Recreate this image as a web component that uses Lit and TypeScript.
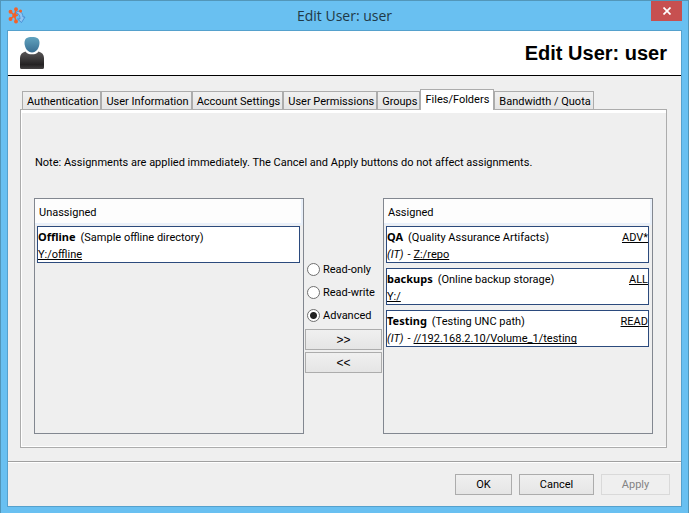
import { LitElement, html, css, svg } from "lit";
import { customElement, property, state } from "lit/decorators.js";
import { classMap } from "lit/directives/class-map.js";

interface Folder {
  name: string;
  note: string;
  owner?: string;
  path: string;
  access?: string;
}

const TABS = [
  "Authentication",
  "User Information",
  "Account Settings",
  "User Permissions",
  "Groups",
  "Files/Folders",
  "Bandwidth / Quota",
];

const MODES = ["Read-only", "Read-write", "Advanced"];

const UNASSIGNED: Folder[] = [
  { name: "Offline", note: "(Sample offline directory)", path: "Y:/offline" },
];

const ASSIGNED: Folder[] = [
  { name: "QA", note: "(Quality Assurance Artifacts)", owner: "(IT)", path: "Z:/repo", access: "ADV*" },
  { name: "backups", note: "(Online backup storage)", path: "Y:/", access: "ALL" },
  { name: "Testing", note: "(Testing UNC path)", owner: "(IT)", path: "//192.168.2.10/Volume_1/testing", access: "READ" },
];

@customElement("folder-list")
class FolderList extends LitElement {
  @property() heading = "";
  @property({ attribute: false }) folders: Folder[] = [];

  static styles = css`
    :host {
      display: block;
      box-sizing: border-box;
      min-width: 0;
      border: 1px solid #828790;
    }
    .heading {
      margin: 0;
      padding: 4px 4px 0;
      font-size: 11px;
      font-weight: 400;
      line-height: 20px;
      background: #fdfdfd;
      border-right: 2px solid #e9f0fa;
      border-bottom: 2px solid #e9f0fa;
    }
    .items {
      list-style: none;
      margin: 0;
      padding: 1px 3px 0 2px;
      display: flex;
      flex-direction: column;
      gap: 5px;
    }
    .item {
      border: 1px solid #2b4a7d;
      background: #fff;
      padding-top: 1px;
      display: flex;
      flex-direction: column;
    }
    .row {
      display: flex;
      align-items: baseline;
      line-height: 17px;
      height: 18px;
      white-space: nowrap;
    }
    .row + .row {
      line-height: 18px;
      height: 16px;
    }
    .name {
      font-family: "Noto Sans", sans-serif;
      font-weight: 700;
      margin-right: 5px;
    }
    .owner {
      font-style: italic;
    }
    .owner-gap {
      margin: 0 3px 0 4px;
    }
    .access {
      margin-left: auto;
    }
    a {
      color: #000;
      text-decoration: underline;
      text-underline-offset: 1px;
      text-decoration-skip-ink: none;
    }
  `;

  render() {
    return html`
      <h2 class="heading">${this.heading}</h2>
      <ul class="items">
        ${this.folders.map(
          (f) => html`<li class="item">
            <div class="row">
              <span class="name">${f.name}</span><span>${f.note}</span>
              ${f.access ? html`<a class="access" href="#access">${f.access}</a>` : ""}
            </div>
            <div class="row">
              ${f.owner ? html`<span class="owner">${f.owner}</span><span class="owner-gap">-</span>` : ""}<a href="#path">${f.path}</a>
            </div>
          </li>`
        )}
      </ul>
    `;
  }
}

@customElement("app-root")
class AppRoot extends LitElement {
  @state() private tab = "Files/Folders";
  @state() private mode = "Advanced";

  static styles = css`
    :host {
      display: flex;
      flex-direction: column;
      box-sizing: border-box;
      min-height: 100vh;
      padding: 0 6px 6px;
      background: #69c0f1;
      border: 1px solid #5296b9;
      border-bottom: 0;
      color: #000;
      font: 11px/14px Roboto, "Liberation Sans", sans-serif;
    }
    .titlebar {
      display: grid;
      grid-template-columns: 31px 1fr 31px;
      height: 29px;
      align-items: center;
    }
    .logo {
      display: block;
      margin-left: 1px;
    }
    .caption {
      text-align: center;
      font: 14px/20px "Open Sans", sans-serif;
      color: #1f3947;
    }
    .close {
      align-self: start;
      height: 20px;
      padding: 0;
      border: 0;
      background: #c75050;
      display: grid;
      place-items: center;
    }
    .client {
      flex: 1;
      display: flex;
      flex-direction: column;
      background: #efefef;
      border: 1px solid #55a1cd;
    }
    .banner {
      display: flex;
      align-items: center;
      justify-content: space-between;
      height: 44px;
      padding: 0 14px 0 12px;
      background: #fff;
      border-bottom: 1px solid #000;
    }
    .banner h1 {
      margin: 0;
      font: bold 20px/24px "Liberation Sans", sans-serif;
    }
    .content {
      flex: 1;
      display: flex;
      flex-direction: column;
      padding: 13px 14px 13px 12px;
    }
    .tabs {
      display: flex;
      align-items: flex-end;
      padding: 0 2px;
      z-index: 1;
    }
    .tab {
      box-sizing: border-box;
      height: 18px;
      padding: 2px 2px 0 4px;
      border: 1px solid #acacac;
      border-bottom: 0;
      background: linear-gradient(#f0f0f0, #e5e5e5);
      font: inherit;
      line-height: 15px;
      color: #000;
      white-space: nowrap;
    }
    .tab.selected {
      height: 21px;
      margin-bottom: -1px;
      padding: 0 4px 2px;
      background: #fff;
    }
    .panel {
      flex: 1;
      display: flex;
      flex-direction: column;
      border: 1px solid #acacac;
      box-shadow: inset 1px 3px #fff, inset 0 -1px #fff;
      padding: 46px 13px 13px;
    }
    .note {
      margin: 0 0 28px;
      padding-left: 1px;
    }
    .lists {
      flex: 1;
      display: grid;
      grid-template-columns: 1fr auto 1fr;
    }
    .middle {
      display: flex;
      flex-direction: column;
      gap: 2px;
      width: 77px;
      margin: 60px 1px 0;
    }
    .modes {
      border: 0;
      margin: 0;
      padding: 0 0 0 2px;
    }
    .mode {
      display: flex;
      align-items: center;
      gap: 3px;
      height: 23px;
    }
    .radio {
      appearance: none;
      box-sizing: border-box;
      flex: none;
      width: 13px;
      height: 13px;
      margin: 0;
      border: 1px solid #707070;
      border-radius: 50%;
      background: #fff;
    }
    .radio:checked {
      background: radial-gradient(circle, #222 0 3px, #fff 4px);
    }
    .btn {
      box-sizing: border-box;
      height: 21px;
      padding: 0;
      border: 1px solid #acacac;
      background: linear-gradient(#f0f0f0, #e5e5e5);
      font: inherit;
      color: #000;
    }
    .btn:disabled {
      border-color: #d9d9d9;
      background: #efefef;
      color: #838383;
    }
    .arrows {
      font-family: "Liberation Sans", sans-serif;
      font-size: 12px;
    }
    .footer {
      display: flex;
      justify-content: flex-end;
      gap: 7px;
      padding: 12px 11px 11px;
      border-top: 1px solid #a0a0a0;
      box-shadow: inset 0 1px #fff;
    }
    .ok {
      width: 57px;
    }
    .cancel {
      width: 75px;
    }
    .apply {
      width: 69px;
    }
  `;

  private logo() {
    return svg`<svg class="logo" width="18" height="18" viewBox="0 0 18 18" aria-hidden="true">
      <path d="M7.500 6.500C9 3 14.500 3.500 15 10H17L13.500 15.500L9.500 12H12C12 7.500 10 5.800 7.500 6.500Z" fill="#8fc4f2" stroke="#3f86cf" stroke-width="0.800" />
      <g stroke="#f2622a" stroke-width="1.500" fill="#f2622a">
        <path d="M6.500 8.500L8 2.500M6.500 8.500L2.500 4.800M6.500 8.500L2.500 12M6.500 8.500L8 14.500M6.500 8.500L10 8" />
        <circle cx="8" cy="2.200" r="1.200" /><circle cx="2.500" cy="4.800" r="1.200" />
        <circle cx="2.500" cy="12" r="1.200" /><circle cx="8" cy="14.500" r="1.200" />
        <circle cx="12.500" cy="4" r="0.800" /><circle cx="6.500" cy="8.500" r="1.500" />
      </g>
    </svg>`;
  }

  private person() {
    return svg`<svg width="24" height="32" viewBox="0 0 24 32" aria-hidden="true">
      <defs>
        <linearGradient id="head" x1="0" y1="0" x2="0" y2="1">
          <stop offset="0" stop-color="#61a3bf" /><stop offset="1" stop-color="#386e92" />
        </linearGradient>
        <linearGradient id="body" x1="0" y1="0" x2="0" y2="1">
          <stop offset="0" stop-color="#5a5859" /><stop offset="0.750" stop-color="#242223" /><stop offset="1" stop-color="#444243" />
        </linearGradient>
      </defs>
      <path d="M5.500 14.500C7.500 18.300 16.500 18.300 18.500 14.500C22 15.500 24 17.500 24 21V30.500Q24 32 22.500 32H1.500Q0 32 0 30.500V21C0 17.500 2 15.500 5.500 14.500Z" fill="url(#body)" />
      <path d="M12 0C17 0 19.500 1.500 19.500 6C19.500 11 16 15.500 12 15.500C8 15.500 4.500 11 4.500 6C4.500 1.500 7 0 12 0Z" fill="url(#head)" />
    </svg>`;
  }

  render() {
    return html`
      <header class="titlebar">
        ${this.logo()}
        <span class="caption">Edit User: user</span>
        <button class="close" aria-label="Close">
          <svg width="8" height="8" viewBox="0 0 8 8"><path d="M0.500 0.500L7.500 7.500M7.500 0.500L0.500 7.500" stroke="#fff" stroke-width="1.700" /></svg>
        </button>
      </header>
      <main class="client">
        <div class="banner">
          ${this.person()}
          <h1>Edit User: user</h1>
        </div>
        <div class="content">
          <div class="tabs" role="tablist">
            ${TABS.map(
              (t) => html`<button
                role="tab"
                class=${classMap({ tab: true, selected: t === this.tab })}
                aria-selected=${t === this.tab}
                @click=${() => (this.tab = t)}
              >${t}</button>`
            )}
          </div>
          <section class="panel" role="tabpanel">
            <p class="note">Note: Assignments are applied immediately. The Cancel and Apply buttons do not affect assignments.</p>
            <div class="lists">
              <folder-list heading="Unassigned" .folders=${UNASSIGNED}></folder-list>
              <div class="middle">
                <fieldset class="modes" aria-label="Access">
                  ${MODES.map(
                    (m) => html`<label class="mode">
                      <input class="radio" type="radio" name="mode" .checked=${m === this.mode} @change=${() => (this.mode = m)} />
                      ${m}
                    </label>`
                  )}
                </fieldset>
                <button class="btn arrows">&gt;&gt;</button>
                <button class="btn arrows">&lt;&lt;</button>
              </div>
              <folder-list heading="Assigned" .folders=${ASSIGNED}></folder-list>
            </div>
          </section>
        </div>
        <footer class="footer">
          <button class="btn ok">OK</button>
          <button class="btn cancel">Cancel</button>
          <button class="btn apply" disabled>Apply</button>
        </footer>
      </main>
    `;
  }
}
